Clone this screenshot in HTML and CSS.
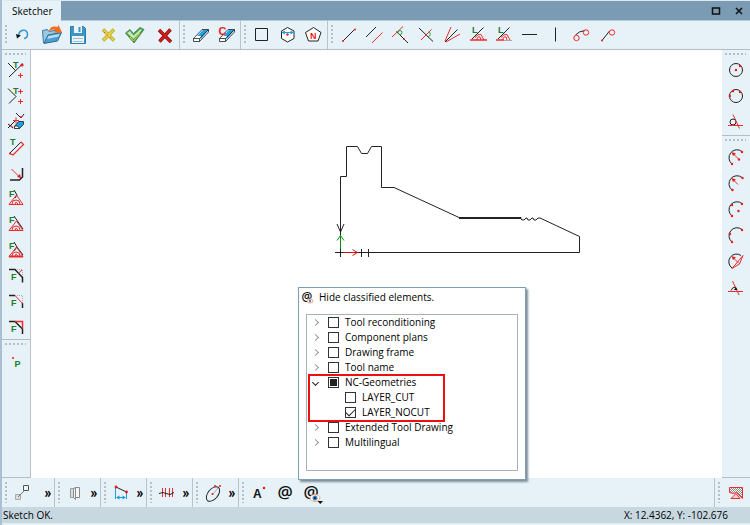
FILE: index.html
```html
<!DOCTYPE html>
<html lang="en">
<head>
<meta charset="utf-8">
<title>Sketcher</title>
<link rel="stylesheet" href="styles.css">
</head>
<body>
<div class="window">
  <header class="titlebar">
    <h1 class="tab">Sketcher</h1>
    <div class="window-buttons">
      <button aria-label="Maximize"><svg viewBox="0 0 24 24"><path class="heavy" d="M8.500 9h7v6h-7z"/></svg></button>
      <button aria-label="Close"><svg viewBox="0 0 24 24"><path class="heavy" d="M9 9l6 6M15 9l-6 6"/></svg></button>
    </div>
  </header>

  <div class="toolbar top">
    <div class="group">
      <button class="after-space" aria-label="Undo"><svg viewBox="0 0 24 24"><path stroke="#2b8fd0" stroke-width="1.400" d="M8.500 13C9 5.500 18 5.500 17.500 11.500Q17.500 15 14 15.500"/><path class="kf" d="M6 11l5 1.500-4 3z"/></svg></button>
      <button aria-label="Open"><svg viewBox="0 0 24 24"><path fill="#9cc8e4" stroke="#39799f" d="M3.500 20L2.500 7.500l5-1 1.500 2 8-1.500 1 3"/><path fill="#4a9fd0" stroke="#2a6e96" d="M4 20.500L8 12l13.500-2.500L17.500 18z"/><path fill="#b9e0f4" d="M8.500 13l11-2-1 2.500-11.500 2.500z" stroke="none"/><path fill="#f76a18" stroke="none" d="M9 9Q10 2 17.500 4L18.500 2 22 9.500 14 9.500 16 7Q12 5.500 9 9z"/></svg></button>
      <button class="after-space" aria-label="Save"><svg viewBox="0 0 24 24"><path fill="#3e96c6" stroke="#2d7ba8" d="M4.500 3.500h13l2 2v15h-15z"/><path fill="#eef5fa" stroke="none" d="M8 3h8v7H8zM6 13h12v7H6z"/><path fill="#3e96c6" stroke="none" d="M12.500 4h2v5h-2z"/><path stroke="#a9bcc8" d="M7 15.500h10M7 18.500h10"/></svg></button>
      <button aria-label="Discard"><svg viewBox="0 0 24 24"><path stroke="#b8a820" stroke-width="3.500" d="M7 6.500l11 11M18 6.500l-11 11"/><path stroke="#e2d348" stroke-width="2" d="M7.500 7l10 10M17.500 7l-10 10"/><path class="r" stroke-dasharray="1 3" d="M8 9l8 7"/></svg></button>
      <button class="after-space" aria-label="Accept"><svg viewBox="0 0 24 24"><path fill="#3a9d49" stroke="#5b8c60" d="M3.500 10L8 6.500l3.500 4L18 4.500l4 2L12 20z"/><path fill="#c9e8b0" stroke="none" d="M5 10l3-2 3.500 4.500 7-6.500 1.500 1-8.500 9z"/><path stroke="#e0d23c" d="M8 14l3.500 4L18 10"/></svg></button>
      <button aria-label="Cancel"><svg viewBox="0 0 24 24"><path stroke="#8c1010" stroke-width="3.500" d="M7 7l12 12M18.500 6.500l-11 12"/><path stroke="#cf1c1c" stroke-width="2" d="M7.500 7l11 12M18.500 6.500l-11 12"/></svg></button>
    </div>
    <div class="group">
      <button aria-label="Erase"><svg viewBox="0 0 24 24"><path fill="#1e9fe2" stroke="none" d="M8 14.500L15 7h5.500l-7.500 9z"/><path fill="#fff" stroke="none" d="M5 15.500l2.500-2.500h5.500l-1.500 5H5z"/><path stroke-width=".8" d="M5.500 15.500L14 6.500h6.500v2.500L11.500 18.500h-6zM5.500 15.500h6v3M11.500 15.500l9-9"/></svg></button>
      <button aria-label="Erase contour"><svg viewBox="0 0 24 24"><path fill="#1e9fe2" stroke="none" d="M8 14.500L15 7h5.500l-7.500 9z"/><path fill="#fff" stroke="none" d="M5 15.500l2.500-2.500h5.500l-1.500 5H5z"/><path stroke-width=".8" d="M5.500 15.500L14 6.500h6.500v2.500L11.500 18.500h-6zM5.500 15.500h6v3M11.500 15.500l9-9"/><text class="rt big" x="4.500" y="12">C</text></svg></button>
    </div>
    <div class="group">
      <button aria-label="Rectangle"><svg viewBox="0 0 24 24"><path d="M6.500 5.500h12v12h-12z"/></svg></button>
      <button aria-label="Hexagon"><svg viewBox="0 0 24 24"><path fill="#fff" d="M12.500 4.500l6.500 3.500v7.500l-6.500 3.500-6-3.500V8z"/><path class="b" d="M7 9.500h11"/><path class="bf" d="M6.500 9.500l3.500-2v4zM19 9.500l-3.500-2v4z"/><circle class="rf" cx="12.500" cy="11.500" r="1.200"/></svg></button>
      <button aria-label="Polygon"><svg viewBox="0 0 24 24"><path fill="#fff" d="M12.500 4.500l7.500 5-3 8.500H7.500l-3-8.500z"/><text class="rt" x="9" y="15.500">N</text></svg></button>
    </div>
    <div class="group open">
      <button aria-label="Line"><svg viewBox="0 0 24 24"><path d="M7 18L19 6"/><circle class="rf" cx="7" cy="18" r="1"/><circle class="rf" cx="19" cy="6.500" r="1"/></svg></button>
      <button aria-label="Parallel line"><svg viewBox="0 0 24 24"><path d="M4 14L14 4"/><path class="r" d="M10 20L20.500 9.500"/></svg></button>
      <button aria-label="Perpendicular line"><svg viewBox="0 0 24 24"><path class="r" d="M4 14L15 3.500"/><path d="M8.500 8.500L20 20"/><circle class="g" cx="12" cy="9.500" r="2"/><circle class="rf" cx="16" cy="16" r="1"/></svg></button>
      <button aria-label="Crossing line"><svg viewBox="0 0 24 24"><path d="M5 5l14 13.500"/><path class="r" d="M7 17L17.500 6.500"/><path class="g" d="M15 8.500Q18 12 14 14"/></svg></button>
      <button aria-label="Bisector"><svg viewBox="0 0 24 24"><path d="M5 19L17.500 6.500"/><path class="r" d="M5 18L11 4M6 19l14-8"/></svg></button>
      <button aria-label="Line at angle"><svg viewBox="0 0 24 24"><path d="M6 16L17.500 4.500"/><path class="r" stroke-width="1.500" d="M4 17h17"/><path class="r" d="M9 14.500q3-4 6-3l3 5.500M11 17q0-4 3-3l1 3"/><text class="gt" x="6" y="10">L</text></svg></button>
      <button aria-label="Line at angle through point"><svg viewBox="0 0 24 24"><path d="M6 16L17.500 4.500"/><path class="r" stroke-width="1.500" d="M4 17h8"/><path class="n" d="M12 17.500h8"/><path class="r" d="M9 14.500q3-4 6-3l3 5.500M11 17q0-4 3-3l1 3"/><text class="gt" x="6" y="10">L</text></svg></button>
      <button aria-label="Horizontal line"><svg viewBox="0 0 24 24"><path d="M4 11.500h15"/></svg></button>
      <button aria-label="Vertical line"><svg viewBox="0 0 24 24"><path d="M11.500 4.500v14"/></svg></button>
      <button aria-label="Tangent to two circles"><svg viewBox="0 0 24 24"><path d="M5.500 12Q9 8 15 7.500"/><circle class="r" cx="6.500" cy="15" r="2.700"/><circle class="r" cx="16" cy="9.500" r="2.700"/></svg></button>
      <button aria-label="Tangent to circle"><svg viewBox="0 0 24 24"><path d="M6 17.500L13.500 8"/><circle class="r" cx="16" cy="9.500" r="2.700"/><circle class="rf" cx="6" cy="17.500" r="1"/></svg></button>
    </div>
  </div>

  <main class="workspace">
    <div class="sidebar left">
      <div class="group main-tools">
        <button aria-label="Trim"><svg viewBox="0 0 24 24"><path d="M4 5l8 8M5 19L19 5.500"/><path class="r" d="M14 17.500h5m-2.500-2.500v5"/><circle class="rf" cx="18" cy="7" r="1.600"/><text class="gt" x="9" y="10">T</text></svg></button>
        <button aria-label="Trim both"><svg viewBox="0 0 24 24"><path d="M4 4.500l8 8-7 7"/><path class="r" d="M14 7.500h5m-2.500-2.500v5M14 17.500h5m-2.500-2.500v5"/><text class="gt" x="9" y="10">T</text></svg></button>
        <button aria-label="Erase section"><svg viewBox="0 0 24 24"><path d="M12 4l5 5 3-4M4 19l8-8M4 15l5 4"/><path fill="#1e9fe2" stroke-width=".8" d="M10.500 17.500l4-5h5v3l-4 4h-5z"/><path fill="#fff" stroke-width=".8" d="M10.500 17h3l2 2.500h-5z"/><path class="r" d="M9 11.500h6M12 8.500v6M6 15.500l3 3"/><circle class="rf" cx="17" cy="8" r="1"/></svg></button>
        <button aria-label="Move line"><svg viewBox="0 0 24 24"><path d="M5.500 18.500L17 7"/><path class="r" stroke-width="1.200" d="M5.500 18.500l3.500 1.500L19.500 9.500 17 7"/><circle class="rf" cx="6" cy="18.500" r="1"/><text class="gt" x="6" y="10">T</text></svg></button>
        <button aria-label="Round corner"><svg viewBox="0 0 24 24"><path stroke-width="1.500" d="M18.500 7v9l-3 3H6"/><path class="r" d="M7.500 8l9 9"/><path class="rf" d="M17 17l-4-1 3-3z"/></svg></button>
        <button aria-label="Angle first"><svg viewBox="0 0 24 24"><path d="M10 4l3 5-2 3"/><path class="r" d="M5 18.500L12.500 9 19 18.500zM8 18q0-4 4-4t4 4M11 18l1-2 2 2"/><text class="gt" x="5" y="11">F</text></svg></button>
        <button aria-label="Angle second"><svg viewBox="0 0 24 24"><path d="M10 4l9 13"/><path class="r" d="M5 18.500L12.500 9 19 18.500zM8 18q0-4 4-4t4 4M11 18l1-2 2 2"/><text class="gt" x="5" y="11">F</text></svg></button>
        <button aria-label="Angle third"><svg viewBox="0 0 24 24"><path d="M10 4l3 5-3 4M13 9l6 8"/><path class="r heavy-r" d="M5 18.500h14"/><path class="r" d="M5 18.500L12.500 9 19 18.500M8 18q0-4 4-4t4 4M11 18l1-2 2 2"/><text class="gt" x="5" y="11">F</text></svg></button>
        <button aria-label="Chamfer"><svg viewBox="0 0 24 24"><path class="n" stroke-dasharray="1 1" d="M11 6.500h7.500v8"/><path stroke-width="1.500" d="M5 6.500h6l7.500 8v5"/><path class="r" d="M14 10.500L18 7"/><text class="gt" x="7" y="17">F</text></svg></button>
        <button aria-label="Chamfer line"><svg viewBox="0 0 24 24"><path class="n" stroke-dasharray="1 1" d="M11 6.500h7.500v8"/><path stroke-width="1.500" d="M5 6.500h6M18.500 14v5"/><path class="r" d="M11 6.500l7.500 8"/><text class="gt" x="7" y="17">F</text></svg></button>
        <button aria-label="Chamfer corner"><svg viewBox="0 0 24 24"><path stroke-width="1.500" d="M5 6.500h6l7.500 7.500v5"/><path class="r" stroke-width="1.500" d="M11 6.500h7.500v7"/><text class="gt" x="7" y="17">F</text></svg></button>
      </div>
      <div class="group">
        <button aria-label="Point"><svg viewBox="0 0 24 24"><circle class="rf" cx="9" cy="8" r="1"/><text class="gt" x="10.500" y="17">P</text></svg></button>
      </div>
    </div>

    <svg class="canvas" viewBox="31 50 691 428" preserveAspectRatio="xMinYMin meet" role="img" aria-label="Sketch geometry">
      <path d="M340.500 252.500V176.500H346.500V146.500H357.500L361.500 153.500H367.500L371.500 146.500H381.500V187.500H394L459 217.500"/>
      <path stroke-width="2" d="M459 218H521"/>
      <path d="M521 217.500v1.500l1 1h2l2-2h1l1 2h2l2-2h1l1 2h2l2-2h2L579.500 236.500V252.500H335M340.500 257V248"/>
      <path d="M337 224l3.500 8 3.500-8M361.500 249v8M368.500 249v8M361.500 252.500h7"/>
      <path stroke="#0a8a1a" d="M340.500 249V235M337 240.500l3.500-5 3.500 5"/>
      <path stroke="#d01010" d="M343 252.500h14M352.500 249.500l5 3-5 3"/>
    </svg>

    <div class="sidebar right">
      <div class="group">
        <button aria-label="Circle by center"><svg viewBox="0 0 24 24"><circle cx="12" cy="12" r="6.500"/><circle class="rf" cx="12" cy="12" r="1.200"/><circle class="rf" cx="16" cy="8" r="1.200"/></svg></button>
        <button aria-label="Circle by points"><svg viewBox="0 0 24 24"><circle cx="12" cy="12" r="6.500"/><circle class="rf" cx="5.800" cy="12" r="1.200"/><circle class="rf" cx="9" cy="7" r="1.200"/><circle class="rf" cx="16" cy="8" r="1.200"/></svg></button>
        <button aria-label="Tangent circle"><svg viewBox="0 0 24 24"><circle cx="9" cy="12" r="3"/><path class="r" d="M4 15.500h15M9 4.500l6.500 14"/></svg></button>
      </div>
      <div class="group rest">
        <button aria-label="Arc by radius"><svg viewBox="0 0 24 24"><path d="M8 18A7.500 7.500 0 0 1 18 5.500"/><path class="r" d="M15 13.500L9 7.500"/><path class="rf" d="M7.500 6l4.500 1.500L9 10z"/><circle class="rf" cx="8" cy="18" r="1.200"/><circle class="rf" cx="18" cy="6" r="1.200"/><circle class="rf" cx="15" cy="13.500" r="1.200"/></svg></button>
        <button aria-label="Arc by ends and radius"><svg viewBox="0 0 24 24"><path d="M8 18A7.500 7.500 0 0 1 18 5.500"/><path class="r" d="M14 12.500L9 7.500"/><path class="rf" d="M7.500 6l4.500 1.500L9 10z"/><circle class="rf" cx="8.500" cy="18" r="1.200"/><circle class="rf" cx="18.500" cy="6" r="1.200"/></svg></button>
        <button aria-label="Arc by center"><svg viewBox="0 0 24 24"><path d="M8 18A7.500 7.500 0 0 1 18 5.500"/><circle class="rf" cx="8" cy="18" r="1.200"/><circle class="rf" cx="18" cy="6" r="1.200"/><circle class="rf" cx="8" cy="7" r="1.200"/><circle class="rf" cx="14.500" cy="13" r="1.200"/></svg></button>
        <button aria-label="Arc by three points"><svg viewBox="0 0 24 24"><path d="M8 18A7.500 7.500 0 0 1 18 5.500"/><circle class="rf" cx="8" cy="18" r="1.200"/><circle class="rf" cx="18" cy="6" r="1.200"/><circle class="rf" cx="6" cy="10" r="1.200"/></svg></button>
        <button aria-label="Arc by chord"><svg viewBox="0 0 24 24"><path d="M8 18A7.500 7.500 0 0 1 17 5.500"/><path class="r" d="M8 18.500L19 5.500M9 7.500l6 6M19 5.500l-3.500 8.500L8 18.500"/><path class="rf" d="M7.500 6l4.500 1.500L9 10z"/></svg></button>
        <button aria-label="Tangent arc"><svg viewBox="0 0 24 24"><path d="M7 14.500Q8 11 12 11"/><path class="r" d="M4 15.500h15M8.500 5l6.500 14"/><path class="kf" d="M10 14l2-3 1.500 3z"/></svg></button>
      </div>
    </div>
  </main>

  <div class="toolbar bottom">
    <div class="group first">
      <button aria-label="Move"><svg viewBox="0 0 24 24"><path class="n" fill="#dcdcdc" d="M5.500 13.500h5v5h-5z"/><path stroke="#777" d="M8 16l7-7"/><path stroke="#555" d="M13.500 4.500h5v5h-5z"/></svg></button>
      <button class="more" aria-label="More move tools">»</button>
    </div>
    <div class="group">
      <button aria-label="Mirror"><svg viewBox="0 0 24 24"><path stroke="#999" fill="#ddd" d="M7.500 7.500h3v9h-3z"/><path stroke="#888" fill="#f5f5f5" d="M12.500 6.500h4v10h-4zM10.500 16.500l2 2v-12l-2 1z"/></svg></button>
      <button class="more" aria-label="More mirror tools">»</button>
    </div>
    <div class="group">
      <button aria-label="Dimension"><svg viewBox="0 0 24 24"><path d="M7 6l10.500 5"/><path class="b" d="M6.500 7v11M17.500 12v6M8 16.500h8"/><path class="bf" d="M7 16.500l3.500-2v4zM17 16.500l-3.500-2v4z"/><circle class="rf" cx="7" cy="6" r="1.400"/><circle class="rf" cx="17.500" cy="11" r="1.400"/></svg></button>
      <button class="more" aria-label="More dimensions">»</button>
    </div>
    <div class="group">
      <button aria-label="Split"><svg viewBox="0 0 24 24"><path class="r" d="M7.500 7v9M10.500 7v9M14.500 7v9M17.500 7v9"/><path d="M4 12.500l4-1 3 1 4 1 4-2"/></svg></button>
      <button class="more" aria-label="More split tools">»</button>
    </div>
    <div class="group">
      <button aria-label="Ellipse"><svg viewBox="0 0 24 24"><ellipse cx="12" cy="13" rx="8.500" ry="5" transform="rotate(-50 12 13)"/><path class="n" d="M12 13l5-6"/><circle class="rf" cx="11.500" cy="13" r="1"/><circle class="rf" cx="14" cy="5" r="1"/><circle class="rf" cx="19" cy="5" r="1"/></svg></button>
      <button class="more" aria-label="More ellipses">»</button>
    </div>
    <div class="group open">
      <button aria-label="Text"><svg viewBox="0 0 24 24"><text class="kt letter" x="6" y="17">A</text><circle class="rf" cx="17" cy="7" r="1.300"/></svg></button>
      <button aria-label="Classify"><svg viewBox="0 0 24 24"><text class="kt at" x="12" y="17">@</text></svg></button>
      <button aria-label="Hide classified"><svg viewBox="0 0 24 24"><text class="kt at" x="12" y="17">@</text><ellipse cx="16" cy="17" rx="5" ry="3.500" fill="#fff" stroke="#e8a58a"/><circle cx="16" cy="17" r="2.500" fill="#3f88c4" stroke="none"/><circle class="kf" cx="16" cy="17" r="1"/><path class="kf" d="M18.500 20h5.500l-2.700 3z"/></svg></button>
    </div>
    <div class="group end">
      <button aria-label="Hatch"><svg viewBox="0 0 24 24"><defs><pattern id="hatch" width="2" height="2" patternUnits="userSpaceOnUse"><rect width="2" height="2" fill="#fff" stroke="none"/><rect width="1" height="1" fill="#888" stroke="none"/><rect x="1" y="1" width="1" height="1" fill="#888" stroke="none"/></pattern></defs><path class="r" fill="url(#hatch)" d="M5.500 6.500h13v11l-6-6-3 1-4-1z"/><path class="r" fill="#fbd0d0" d="M7 17.500l5-5 4 5z"/></svg></button>
    </div>
  </div>

  <footer class="status"><span>Sketch OK.</span><span>X: 12.4362, Y: -102.676</span></footer>

  <section class="popup" aria-label="Hide classified elements">
    <h2><svg viewBox="0 0 12 16"><text class="kt small-at" x="6" y="12">@</text><ellipse cx="9" cy="12" rx="3" ry="2" fill="#fff" stroke="#e8a58a"/><circle cx="9" cy="12" r="1.200" fill="#3f88c4" stroke="none"/></svg>Hide classified elements.</h2>
    <ul class="tree">
      <li><div class="row"><i class="chevron"></i><label><input type="checkbox">Tool reconditioning</label></div></li>
      <li><div class="row"><i class="chevron"></i><label><input type="checkbox">Component plans</label></div></li>
      <li><div class="row"><i class="chevron"></i><label><input type="checkbox">Drawing frame</label></div></li>
      <li><div class="row"><i class="chevron"></i><label><input type="checkbox">Tool name</label></div></li>
      <li class="marked"><div class="row"><i class="chevron expanded"></i><label><input type="checkbox" class="mixed" aria-checked="mixed">NC-Geometries</label></div>
        <ul>
          <li><div class="row"><label><input type="checkbox">LAYER_CUT</label></div></li>
          <li><div class="row"><label><input type="checkbox" checked>LAYER_NOCUT</label></div></li>
        </ul>
      </li>
      <li><div class="row"><i class="chevron"></i><label><input type="checkbox">Extended Tool Drawing</label></div></li>
      <li><div class="row"><i class="chevron"></i><label><input type="checkbox">Multilingual</label></div></li>
    </ul>
  </section>
</div>
</body>
</html>
```

FILE: styles.css
```css
* { box-sizing: border-box; }

body {
  margin: 0;
  font: 10px/15px "Open Sans", "Noto Sans", sans-serif;
  color: #000;
}

h1, h2, ul { margin: 0; padding: 0; font: inherit; list-style: none; }

.window {
  position: relative;
  display: grid;
  grid-template-rows: 21px 29px 1fr 29px 18px;
  min-height: 100vh;
  border-left: 2px solid #a9c0d4;
  background: #fff;
}

/* title bar */
.titlebar {
  display: flex;
  justify-content: space-between;
  border-top: 1px solid #dfe9ef;
  border-bottom: 1px solid #b5cad8;
  background: #7a9bb3;
}
.tab {
  padding: 3px 8px 0 10px;
  margin-bottom: -1px;
  background: #e6f2f8;
  line-height: 15px;
}
.window-buttons { display: flex; align-items: center; }
.window-buttons button { width: 23px; height: 19px; }

/* buttons and icons */
button {
  display: flex;
  align-items: center;
  justify-content: center;
  flex: none;
  width: 26px;
  height: 26px;
  padding: 0;
  border: 0;
  background: none;
  font: inherit;
  color: inherit;
}
svg { flex: none; fill: none; stroke: #222; }
button svg { display: block; width: 24px; height: 24px; overflow: visible; }
.heavy { stroke-width: 1.5; stroke: #111; }
.r { stroke: #ee2a2a; }
.heavy-r { stroke-width: 2; }
.g { stroke: #2c9a3c; }
.b { stroke: #18a0e0; }
.n { stroke: #aaa; }
.rf { fill: #f01818; stroke: none; }
.kf { fill: #111; stroke: none; }
.bf { fill: #18a0e0; stroke: none; }
text { stroke: none; font: bold 9px "Liberation Sans", sans-serif; }
.rt { fill: #ee1c1c; }
.gt { fill: #1f7d2c; }
.kt { fill: #111; }
.big { font-size: 11px; }
.letter { font-size: 12px; }
.at { font: 600 17px "Open Sans", sans-serif; text-anchor: middle; }
.small-at { font: 600 12px "Open Sans", sans-serif; text-anchor: middle; }

/* tool bars */
.toolbar { display: flex; background: #e6f2f8; }
.toolbar.top { border-bottom: 1px solid #b4bec4; }
.group { position: relative; background: #e6f2f8; }
.toolbar .group {
  display: flex;
  align-items: center;
  padding: 0 1px 0 7px;
  border-right: 1px solid #b9c3c9;
}
.toolbar.top .group:first-child { padding-right: 2px; }
.toolbar .open { border-right: 0; }
.toolbar .after-space { margin-right: 4px; }
.group::before {
  content: "";
  position: absolute;
  background: repeating-linear-gradient(#b4bfc6 0 2px, transparent 2px 4px);
  width: 2px;
  top: 4px;
  bottom: 4px;
  left: 3px;
}
.bottom .group { padding-right: 0; }
.bottom .more { width: 12px; font: bold 16px/20px Lato, sans-serif; padding-bottom: 2px; }
.bottom .first .more { width: 19px; padding-left: 7px; }
.bottom .end { margin-left: auto; padding-right: 1px; border-left: 1px solid #b9c3c9; border-right: 0; padding-left: 8px; }

/* work area */
.workspace { display: flex; min-height: 0; }
.canvas { flex: 1; min-width: 0; height: 100%; align-self: flex-start; }
.sidebar { display: flex; flex-direction: column; flex: none; width: 29px; border-bottom: 1px solid #b4bec4; background: #e6f2f8; }
.sidebar.left { border-right: 1px solid #b9c3c9; }
.sidebar.right { width: 28px; }
.sidebar .group {
  display: flex;
  flex-direction: column;
  align-items: center;
  padding-top: 7px;
  border-bottom: 1px solid #b4bec4;
}
.sidebar .main-tools { flex: 0 0 68%; }
.sidebar .main-tools button { flex: 1; height: auto; min-height: 0; }
.sidebar .group:last-child { border-bottom: 0; padding-top: 9px; }
.sidebar .group::before {
  background: repeating-linear-gradient(90deg, #b4bfc6 0 2px, transparent 2px 4px);
  width: auto;
  height: 2px;
  top: 3px;
  bottom: auto;
  left: 3px;
  right: 4px;
}

/* status bar */
.status {
  display: flex;
  justify-content: space-between;
  padding: 1px 22px 0 1px;
  border-bottom: 2px solid #e3edf2;
  background: #c8d8e1;
}

/* popup with the classification tree */
.popup {
  position: absolute;
  left: 296px;
  top: 287px;
  width: 228px;
  padding: 1px 7px 8px;
  border: 1px solid #7f9db3;
  background: #fff;
  box-shadow: 2px 2px 2px #7d8d98;
}
.popup h2 { display: flex; align-items: center; gap: 6px; height: 16px; margin: 0 0 9px -5px; }
.popup h2 svg { width: 12px; height: 16px; overflow: visible; }
.tree { padding: 0 0 20px; border: 1px solid #aab1b5; }
.row { display: flex; align-items: center; height: 15px; }
.tree ul { padding-left: 38px; }
label { display: flex; align-items: center; white-space: nowrap; }
.chevron { width: 5px; height: 5px; margin: 0 10px 0 6px; border: solid #999; border-width: 1px 1px 0 0; transform: rotate(45deg); }
.chevron.expanded { border-color: #222; transform: rotate(135deg); }
input[type="checkbox"] {
  appearance: none;
  display: grid;
  place-items: center;
  width: 11px;
  height: 11px;
  margin: 0 6px 0 0;
  border: 1px solid #333;
  background: #fff;
}
input.mixed::before { content: ""; width: 7px; height: 7px; background: #222; }
input:checked::before { content: ""; width: 8px; height: 4px; margin-top: -3px; border: solid #222; border-width: 0 0 1px 1px; transform: rotate(-45deg); }
.marked { position: relative; }
.marked::after {
  content: "";
  position: absolute;
  left: 1px;
  right: 72px;
  top: -1px;
  bottom: -2px;
  border: 2px solid #ee1010;
}
```
